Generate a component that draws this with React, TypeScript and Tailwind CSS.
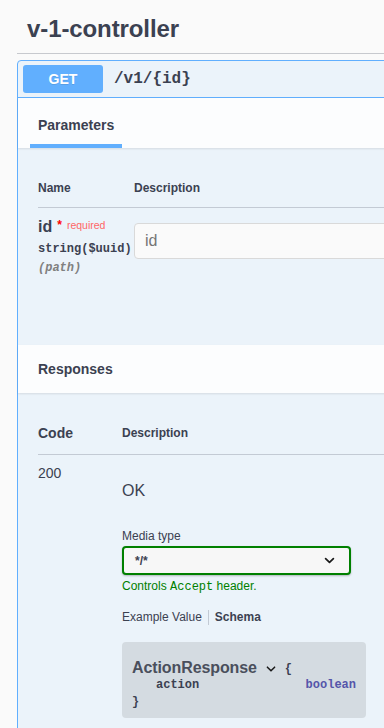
import React from "react";

const mono = "font-['Liberation_Mono','DejaVu_Sans_Mono',monospace]";

function ChevronDown({ className = "" }: { className?: string }) {
  return (
    <svg viewBox="0 0 20 20" className={className} fill="none">
      <path
        d="M4 7l6 6 6-6"
        stroke="currentColor"
        strokeWidth="2.6"
        strokeLinecap="round"
        strokeLinejoin="round"
      />
    </svg>
  );
}

function SectionHeader({ children }: { children: React.ReactNode }) {
  return (
    <div className="relative z-10 flex bg-[#fcfdfe] shadow-[0_1px_2px_rgba(0,0,0,0.1)]">
      {children}
    </div>
  );
}

export default function App() {
  return (
    <div className="min-h-[728px] w-[384px] overflow-hidden bg-[#fafafa] font-['Liberation_Sans',Arial,sans-serif] text-[#3b4151]">
      <div className="pl-[17px]">
        <h3 className="flex h-[54px] w-[420px] items-center border-b border-[#c7c9ce] pl-[10px] pt-[5px] text-[24px] font-bold tracking-[-0.1px]">
          v-1-controller
        </h3>

        <div className="mt-[6px] w-[440px] rounded-[4px] border border-[#61affe] bg-[#ebf3fa]">
          {/* summary */}
          <div className="flex items-center border-b border-[#61affe] p-[4px] pl-[5px]">
            <span className="flex h-[28px] w-[80px] items-center justify-center rounded-[3px] bg-[#61affe] text-[14px] font-bold text-white [text-shadow:0_1px_0_rgba(0,0,0,0.1)]">
              GET
            </span>
            <span className={`${mono} ml-[11px] text-[16px] font-bold`}>/v1/&#123;id&#125;</span>
          </div>

          {/* parameters */}
          <SectionHeader>
            <div className="ml-[12px] flex h-[50px] items-center border-b-4 border-[#61affe] px-[8px] pt-[8px] text-[14px] font-bold">
              Parameters
            </div>
          </SectionHeader>
          <div className="h-[197px] px-[20px] pt-[21px]">
            <div className="flex border-b border-[#c3cad4] pt-[12px] pb-[11px] text-[12px] font-bold leading-[15px]">
              <div className="w-[96px] shrink-0">Name</div>
              <div>Description</div>
            </div>
            <div className="flex pt-[10px]">
              <div className="w-[96px] shrink-0">
                <div className="flex items-start text-[16px] font-bold leading-[18px]">
                  id
                  <span className="ml-[5px] mt-[-2px] text-[12px] text-[#ff0000]">*</span>
                  <span className="ml-[5px] mt-[-2px] text-[10.5px] font-normal text-[#ff6666]">required</span>
                </div>
                <div className={`${mono} pt-[6px] text-[12px] font-bold leading-[15px]`}>string($uuid)</div>
                <div className={`${mono} pt-[4px] text-[12px] font-bold italic leading-[15px] text-[#808080]`}>(path)</div>
              </div>
              <div className="mt-[5px] flex h-[36px] w-[340px] shrink-0 items-center rounded-[4px] border border-[#d9d9d9] bg-[#fafafa] px-[10px] text-[16px] text-[#757575]">
                id
              </div>
            </div>
          </div>

          {/* responses */}
          <SectionHeader>
            <div className="flex h-[48px] items-center pl-[20px] text-[14px] font-bold">Responses</div>
          </SectionHeader>
          <div className="px-[20px] pt-[20px] pb-[20px]">
            <div className="flex items-center border-b border-[#c3cad4] py-[12px] font-bold">
              <div className="w-[84px] shrink-0 text-[14px] leading-[17px]">Code</div>
              <div className="text-[12px] leading-[17px]">Description</div>
            </div>
            <div className="flex pt-[10px]">
              <div className="w-[84px] shrink-0 text-[14px] leading-[17px]">200</div>
              <div className="w-[244px]">
                <div className="mt-[16px] text-[16px] leading-[19px]">OK</div>
                <div className="mt-[29px] text-[12px] leading-[15px]">Media type</div>
                <div className="mt-[2px] flex h-[29px] w-[229px] items-center justify-between rounded-[4px] border-2 border-[#008000] bg-[#f7f7f7] pl-[11px] pr-[13px] text-[12px] font-bold shadow-[0_1px_2px_rgba(0,0,0,0.25)]">
                  <span>*/*</span>
                  <ChevronDown className="h-[13px] w-[13px] text-[#1a1a1a]" />
                </div>
                <div className="mt-[4px] text-[12px] leading-[15px] text-[#008000]">
                  Controls <span className={`${mono} text-[12px]`}>Accept</span> header.
                </div>
                <div className="mt-[15px] flex items-center text-[12px] leading-[15px]">
                  <span>Example Value</span>
                  <span className="mx-[6px] h-[15px] w-px bg-[#c3cad4]" />
                  <span className="font-bold">Schema</span>
                </div>
                <div className="mt-[17px] h-[76px] rounded-[4px] bg-[#d4dbe1] px-[10px] pt-[14px]">
                  <div className="flex items-center">
                    <span className="text-[16px] font-bold leading-[19px] tracking-[-0.1px] text-[#4a4f5c]">ActionResponse</span>
                    <ChevronDown className="ml-[8px] mt-[3px] h-[12px] w-[12px] text-[#1a1a1a]" />
                    <span className={`${mono} ml-[8px] mt-[4px] text-[12px] font-bold`}>&#123;</span>
                  </div>
                  <div className={`${mono} flex justify-between pl-[24px] text-[12px] font-bold leading-[15px]`}>
                    <span>action</span>
                    <span className="text-[#55a]">boolean</span>
                  </div>
                  <div className={`${mono} mt-[2px] text-[12px] font-bold leading-[15px]`}>&#125;</div>
                </div>
              </div>
            </div>
          </div>
        </div>
      </div>
    </div>
  );
}
